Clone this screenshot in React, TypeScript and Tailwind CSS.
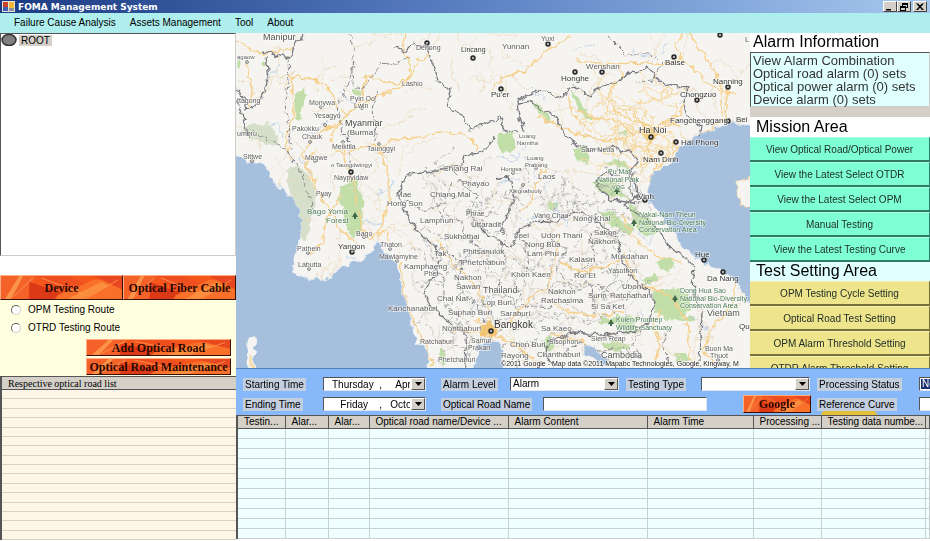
import type { ReactNode } from "react";

const SEA = "#a5bfdd";
const LAND = "#f5f4f1";

type Label = [text: string, x: number, y: number, size?: number, color?: string];

const GREEN = "#4a7a55";
const DARK = "#333333";

const labels: Label[] = [
  ["Manipur", 263, 40, 9, "#555"],
  ["agaow", 237, 59, 6],
  ["Dehong", 416, 50, 7],
  ["Lincang", 461, 52, 7, DARK],
  ["Lashio", 402, 86, 7],
  ["Monywa", 309, 105, 7],
  ["Pyin Oo", 350, 101, 7],
  ["Lwin", 354, 108, 7],
  ["Yesagyo", 314, 118, 7],
  ["Myanmar", 345, 126, 9, "#444"],
  ["(Burma)", 347, 135, 8, "#555"],
  ["Pakokku", 292, 131, 7],
  ["Chauk", 302, 139, 7],
  ["Meiktila", 332, 149, 7],
  ["Taunggyi", 367, 151, 7],
  ["ttagong", 237, 103, 7],
  ["umbru", 237, 136, 7],
  ["Sittwe", 243, 159, 7],
  ["Magwe", 305, 160, 7],
  ["o Taungdwingyi", 331, 167, 6],
  ["Naypyidaw", 334, 180, 7],
  ["Pyay", 316, 196, 7],
  ["Chiang Rai", 443, 171, 8],
  ["Phayao", 462, 186, 8],
  ["Mae", 396, 197, 8],
  ["Chiang Mai", 430, 197, 8],
  ["Hong Son", 387, 206, 8],
  ["Bago Yoma", 307, 214, 8, GREEN],
  ["Forest", 326, 223, 8, GREEN],
  ["Bago", 356, 236, 7],
  ["Yangon", 338, 249, 8, DARK],
  ["Pathein", 297, 251, 7],
  ["Labutta", 298, 267, 7],
  ["Thaton", 380, 247, 7],
  ["Mawlamyine", 379, 259, 7],
  ["Lamphun", 420, 223, 8],
  ["Phrae", 466, 216, 7],
  ["Uttaradit", 471, 227, 8],
  ["Sukhothai", 444, 239, 8],
  ["Tak", 434, 256, 8],
  ["Phitsanulok", 463, 254, 8],
  ["Phetchabun", 462, 265, 8],
  ["Kamphaeng", 404, 269, 8],
  ["Phet", 424, 276, 7],
  ["Nakhon", 454, 280, 8],
  ["Sawan", 456, 289, 8],
  ["Thailand", 483, 293, 9],
  ["Chai Nat", 437, 301, 8],
  ["Lop Buri", 482, 305, 8],
  ["Kanchanaburi", 388, 311, 8],
  ["Suphan Buri", 448, 315, 8],
  ["Saraburi", 500, 316, 8],
  ["Nonthaburi", 442, 331, 8],
  ["Bangkok", 494, 328, 10, DARK],
  ["Ratchaburi", 420, 344, 7],
  ["Samut", 471, 343, 7],
  ["Prakan", 468, 350, 7],
  ["Phetchaburi", 438, 362, 7],
  ["Chon Buri", 510, 347, 8],
  ["Rayong", 501, 358, 8],
  ["Chanthaburi", 537, 357, 8],
  ["Sa Kaeo", 541, 331, 8],
  ["Sisophon", 549, 344, 7],
  ["Siem Reap", 591, 341, 7],
  ["Cambodia", 601, 358, 9, "#555"],
  ["Yunnan", 502, 49, 8],
  ["Yuxi", 541, 41, 7],
  ["Pu'er", 491, 97, 8, DARK],
  ["Honghe", 561, 81, 8, DARK],
  ["Wenshan", 586, 69, 8],
  ["Baise", 665, 65, 8, DARK],
  ["Nanning", 713, 84, 8, DARK],
  ["Chongzuo", 680, 97, 8, DARK],
  ["Fangchenggang", 670, 123, 8, DARK],
  ["Bei", 736, 122, 8, DARK],
  ["Ha Noi", 639, 133, 9, DARK],
  ["Hai Phong", 681, 145, 8, DARK],
  ["Nam Dinh", 643, 162, 8, DARK],
  ["Luang", 519, 138, 6],
  ["Namtha", 517, 145, 6],
  ["Luang", 527, 160, 6],
  ["Prabang", 525, 167, 6],
  ["Hongsa", 501, 171, 6],
  ["Laos", 538, 179, 8],
  ["Xaignabouly", 509, 193, 6],
  ["Sam Neua", 581, 152, 7],
  ["Pu Mat", 608, 174, 7, GREEN],
  ["National Park", 597, 182, 7, GREEN],
  ["- VQG", 608, 189, 6, GREEN],
  ["Vinh", 638, 199, 8, DARK],
  ["Vang Chao", 534, 218, 7],
  ["Nong Khai", 573, 221, 8],
  ["Loei", 514, 238, 8],
  ["Udon Thani", 541, 238, 8],
  ["Sakon", 594, 235, 8],
  ["Nakhon", 588, 244, 8],
  ["Nong Bua", 525, 247, 8],
  ["Lam Phu", 527, 256, 8],
  ["Kalasin", 569, 262, 8],
  ["Mukdahan", 611, 259, 8],
  ["Khon Kaen", 511, 277, 8],
  ["Roi Et", 574, 278, 8],
  ["Yasothon", 608, 273, 7],
  ["Ubon", 622, 289, 8],
  ["Ratchathani", 610, 298, 8],
  ["Nakhon", 548, 294, 8],
  ["Ratchasima", 541, 303, 8],
  ["Surin", 588, 298, 8],
  ["Si Sa Ket", 591, 309, 8],
  ["Nakai-Nam Theun", 639, 217, 7, GREEN],
  ["National Bio-Diversity", 639, 225, 7, GREEN],
  ["Conservation Area", 639, 232, 7, GREEN],
  ["Hue", 695, 257, 8, DARK],
  ["Da Nang", 707, 281, 8, DARK],
  ["Dong Hua Sao", 680, 293, 7, GREEN],
  ["National Bio-Diversity", 680, 301, 7, GREEN],
  ["Conservation Area", 680, 308, 7, GREEN],
  ["Vietnam", 707, 316, 9, "#555"],
  ["Kulen Promtep", 616, 322, 7, GREEN],
  ["Wildlife Sanctuary", 616, 330, 7, GREEN],
  ["Qu", 739, 329, 8, DARK],
  ["Buon Ma", 705, 351, 7],
  ["Thuot", 710, 358, 7],
  ["L", 745, 42, 8],
];

const cities: [number, number][] = [
  [427, 43], [473, 58], [548, 44], [575, 72], [602, 72], [674, 57], [728, 87], [501, 89],
  [697, 100], [651, 137], [676, 142], [661, 153], [728, 121], [352, 252], [351, 172],
  [491, 331], [704, 260], [723, 272], [645, 200], [720, 35],
];

const towns: [number, number][] = [
  [247, 62], [321, 107], [362, 108], [325, 125], [310, 142], [343, 142], [379, 144], [252, 161],
  [315, 161], [308, 253], [309, 269], [364, 237], [390, 249], [397, 261], [536, 168], [523, 185],
  [513, 173], [562, 337], [468, 211], [718, 360], [323, 195],
];

const parks = [
  "M296 93l10-6-2 14-5 20-4-2z",
  "M341 187l14-10 5 12 4 16-2 24-9 10-6-10-4-22-5-10z",
  "M535 103l6 3 11 12-2 4-10-8-6-6z",
  "M572 91l6 4 4 11 8 6 0 8-7-4-6-10-5-8z",
  "M497 134l14-3 5 12-3 11-10-1-7-9z",
  "M591 182l20-4 12 14 8 8-18-3-14-6z",
  "M574 149l10-3 6 10-2 8-12-3z",
  "M602 162l15-4 14 10-2 3-14-5z",
  "M619 132l8 0 0 6-5-2z",
  "M600 213l14-4 8 13 12 4-3 9-12-4-10-7z",
  "M628 203l8 4 7 11 10 2 6 12-14 5-11-16z",
  "M655 262l15-5 5 10-8 5z",
  "M642 280l10-6 8 3-10 8z",
  "M653 291l25-3 11 11 3 11-12 7 14-2 1 6-28-1-12-8z",
  "M600 318l26-3 14 3-6 8 6 6-14 1-10-8-16-3z",
  "M602 345l10-5 17 4 2 5-18 2z",
  "M545 338l7-2 3 12-6 5-5-8z",
  "M438 348l6 0 2 16-4 2z",
  "M262 62l3-1 0 5-4 0z",
  "M549 202l10 0-3 8-8-3z",
  "M674 354l12 0 5 6-12 3z",
  "M354 88l7 2-2 7-5-2z",
  "M237 63l3-3 1 8-3 3z",
];

const roads = [
  "M289 76l20 2 15 5 8 10 5 14 10 7 20-12 20-10 15-4 10-14 5-12 14-8",
  "M365 75l10 4 22 5 12-6 0-16-6-12 2-17",
  "M365 80l-3 20-14 14-10 10-8 15 3 10 12 5 16-7 24-1 8-6 28-3 14-5 27 1 14 12 1 6",
  "M348 114l-14 12-15 6-10 10-7 14 8 14 4 14 8 14",
  "M343 145l2 18 6 14 6 26 6 28 4 8 10-6 10-2 4 12",
  "M362 103l0-12 3-14 8-3",
  "M320 198l12 12 6 16 10 10 12 10",
  "M310 180l-4-16 10-14",
  "M378 146l8 22 4 30-6 20-7 20",
  "M246 62l3 14 4 18-4 14",
  "M237 40l14 10 12 4 30-6",
  "M490 90l12-12 24-8 24-22 20-12",
  "M575 60l30 4 38-1 22 2 16-7 20 18 14 12 20 6",
  "M681 58l-6-12 8-13",
  "M690 33l8 16 16 20 8 20 0 28",
  "M728 88l-2 30-30 20-24 14-12 14-12 28 16 26 22 26 34 18 16 10 12 24",
  "M651 137l-10-14-24-10-10-16 10-18",
  "M651 137l-22-6-10-10-20-2-22-10",
  "M651 137l10-14 20-8 2-12",
  "M651 137l-4 18 10 10-8 16",
  "M630 110l12 14 18 4 12-6 10 4",
  "M538 116l20 10 20 8 30 8 20-4",
  "M568 94l4 20 18 16",
  "M545 168l-10 18-4 16-12 10",
  "M400 262l4 30 10 30 12 24 6 20",
  "M490 330l-2-24-18-26-22-22-10-18",
  "M490 330l20-8 20-24 18-12 8-30 3-24",
  "M545 298l24 14 30 4 26-6",
  "M560 262l20 10 30-6 16-12",
  "M490 332l24 12 20 16",
  "M625 258l12 26 34 12 16 24 4 42",
  "M622 216l10 20 24 20 24 6",
  "M736 282l-4 24-20 22-8 22 10 16",
  "M600 354l-20-14-30-6",
  "M655 366l4-26-6-16 8-14",
  "M476 320l14 10 4 16",
  "M452 330l22 2 16-2",
  "M290 160l-4-24 8-24-2-36",
  "M340 198l-14 20-4 26-12 10",
];

const borders = [
  "M262 51l18 5 10 2 6-16 7-9",
  "M266 56l3 22-9 24-14 8-3-12-6-10",
  "M237 100l8 22 4 14",
  "M396 47l10 4 8-8 14 6 4 10 4 18 14 14-4 16 16 8 8 14 14-4 16-8 4 12 14 4",
  "M524 131l-4-14-2-16 10-6 14-6 12 6 6 3 13-12 10 5 7 6 10-10 20-6 8-9 9 1 9-6 7 5 6 10 18 4 12 2-6 14 4 14 14 10-2 12",
  "M560 127l8 12 18 10 16 2 10-7 8 8 10-2 8 12-8 10 0 18 8 10",
  "M561 127l-6-12-14-6-10-8-12 2",
  "M494 137l-4 8-10 8-16 2-2 10-20 4-16 4-20 1-8 20 8 18 10 18 18 16 6 12-5 18-10 14 4 14 24 22 12 6 1 40",
  "M476 223l14 14 22 10 8-18 16-8 22 2 16-12 20 6 14 14 10 10 4 20 10 18 15 10 8 12-5 20-14 10-34 4-30-2-22 8-5 14 20 26",
  "M495 180l14-3 6 20-8 18-6 18",
  "M632 171l6 24-14 10 30 20 18 24 20 14 2 28 8 22-2 48",
  "M620 176l-16-4-10 10 18 18 28 4",
];

const dashed = [
  "M288 57l1 26-4 20 4 30 2 16",
  "M287 150l-16-10-22-10",
  "M350 33l4 22-2 30 10 4 20-26 12 2 16-8",
  "M354 60l-6 26-10 20 4 28 8 8 0 36",
  "M288 152l14 24 6 20 6 14",
  "M377 91l-4 20 4 30",
  "M455 172l8 14 14 8-8 20 20 18",
  "M432 196l10 20 18 4 8 20 14 10",
  "M405 200l20 12 20-10 8-20",
  "M608 36l18 18 26 0 10 10-10 16-14 2",
  "M550 238l16 12-10 20 18 20 24-6 16 12",
  "M520 234l10 28-16 20 10 24 30 2",
  "M590 234l4 24-16 16 14 12 2 28",
  "M448 250l14 14-4 24 18 16 10 20",
  "M430 270l14 8 0 26 18 14",
  "M500 240l6 20-8 30 16 10 8 18",
  "M560 356l20-14 22 10 20-6 16 16",
  "M640 330l-6 14 10 20M670 326l-8 20 6 18",
];

/** Small wandering polylines used for minor roads and district lines. */
function wander(seed: number, count: number, box: [number, number, number, number], step: number) {
  let s = seed;
  const next = () => {
    s = (s * 16807) % 2147483647;
    return s / 2147483647;
  };
  let d = "";
  for (let i = 0; i < count; i++) {
    d += `M${Math.round(box[0] + next() * box[2])} ${Math.round(box[1] + next() * box[3])}`;
    let a = next() * 6.28;
    for (let k = 0; k < 6; k++) {
      a += (next() - 0.5) * 1.6;
      d += `l${(Math.cos(a) * step).toFixed(1)} ${(Math.sin(a) * step).toFixed(1)}`;
    }
  }
  return d;
}

const minorRoads = wander(77, 190, [236, 33, 514, 335], 6);
const deltaRoads = wander(412, 60, [605, 85, 75, 85], 5);
const thaiRoads = wander(913, 90, [420, 170, 220, 190], 5);
const districts = wander(58, 120, [420, 165, 215, 195], 5);
const rivers = wander(31, 34, [280, 40, 420, 310], 4);

const seas = [
  "M230 150l18 12 17 3 4 10 8 10 16 13 6 14 4 15-6 20-4 25 14 6 18 2 13-10 15-8 7-2 12-7 5-13 6 10 14 13 5 24 5 16 5 20 5 20 11 10 0 24-200 0z",
  "M760 125l-32-2-26 10-12 7-10 7-8 16-19 10-6 20 1 7 15 20 20 27 20 16 20 7 14 13 11 20 12 2z",
  "M474 374l4-26 10-8 12 3 4 14-3 17z",
  "M583 345l6 0 11 7 8 12-6 2-8-8-8-2z",
];

function MapView() {
  return (
    <svg
      viewBox="236 33 514 335"
      preserveAspectRatio="xMidYMid slice"
      className="block h-full w-full"
      role="img"
      aria-label="Map"
      fontFamily="'Liberation Sans', Arial, sans-serif"
    >
      <filter id="rough" filterUnits="userSpaceOnUse" x="226" y="23" width="534" height="355">
        <feTurbulence type="fractalNoise" baseFrequency="0.14" numOctaves="2" seed="4" />
        <feDisplacementMap in="SourceGraphic" scale="8" xChannelSelector="R" yChannelSelector="G" />
      </filter>
      <rect x="236" y="33" width="514" height="335" fill={LAND} />
      <g filter="url(#rough)">
        {parks.map((d) => (
          <path key={d} d={d} fill="#b7d99c" opacity="0.85" />
        ))}
        <path d="M245 125l25-2 8 13-1 11-20-6-14-8zM286 170l14-3 8 10 8 12 0 12-6 24-5 16-6-1 1-22-8-22z" fill="#d5dfc9" />
        <g fill="none" strokeLinejoin="round">
          <path d={minorRoads} stroke="#ecdcc2" strokeWidth="0.8" />
          <path d={thaiRoads} stroke="#d9cfc4" strokeWidth="0.8" />
          <path d={deltaRoads} stroke="#f5d798" strokeWidth="1" />
          <path d={rivers} stroke="#b4cbe4" strokeWidth="0.8" />
          {roads.map((d) => (
            <path key={d} d={d} stroke="#f6d08a" strokeWidth="1.4" />
          ))}
          <path d={districts} stroke="#a4a4a4" strokeWidth="0.8" strokeDasharray="4 2" />
          {dashed.map((d) => (
            <path key={d} d={d} stroke="#85858b" strokeWidth="1" strokeDasharray="5 2" />
          ))}
        </g>
        {seas.map((d) => (
          <path key={d} d={d} fill={SEA} stroke="#dfe8f1" strokeWidth="0.8" />
        ))}
        <path d="M750 177l-12 5 0 15 4 8 18 5v-33z" fill={LAND} stroke="#f3d9a5" />
        <path d="M248 338l6-3 4 4-3 10-2 25-5 0-2-20z" fill={LAND} />
        <path d="M250 352l3 6-1 10-3 0z" fill="#f6dca8" />
        <path d="M481 328l6-6 8 3 4 8-8 4-10-1z" fill="#f0c573" />
        <path d="M644 130l8-3 6 10-6 6-8-4z" fill="#f3cf85" />
        <g fill="none" stroke="#77777e" strokeWidth="1.3" strokeLinejoin="round">
          {borders.map((d) => (
            <path key={d} d={d} />
          ))}
        </g>
      </g>
      {towns.map(([x, y]) => (
        <circle key={`${x}-${y}`} cx={x} cy={y} r="1.4" fill="#fff" stroke="#666" strokeWidth="0.9" />
      ))}
      {cities.map(([x, y]) => (
        <circle key={`${x}-${y}`} cx={x} cy={y} r="2" fill="#aaa" stroke="#222" strokeWidth="1.4" />
      ))}
      {[[355, 216], [617, 191], [634, 223], [675, 299], [611, 323]].map(([x, y]) => (
        <path key={x} d={`M${x} ${y - 4}l3 5h-2v2h-2v-2h-2z`} fill="#3f6b4a" />
      ))}
      <g stroke="#fff" strokeWidth="1.5" strokeOpacity="0.6" paintOrder="stroke">
        {labels.map(([text, x, y, size = 8, color = "#5c5c5c"]) => (
          <text key={`${text}-${x}-${y}`} x={x} y={y} fontSize={size} fill={color}>
            {text}
          </text>
        ))}
        <text x="501" y="366" fontSize="7" fill="#222">
          ©2011 Google - Map data ©2011 Mapabc Technologies, Google, Kingway, M
        </text>
      </g>
    </svg>
  );
}

function FlameButton({ children, className }: { children: ReactNode; className: string }) {
  return (
    <button
      className={`relative overflow-hidden border border-t-[#ffb080] border-l-[#ffb080] border-r-[#3a1005] border-b-[#3a1005] bg-[#f5561c] font-['Liberation_Serif',serif] text-[12px] font-bold whitespace-nowrap text-[#2a0800] ${className}`}
    >
      <svg viewBox="0 0 120 24" preserveAspectRatio="none" className="absolute inset-0 h-full w-full" aria-hidden="true">
        <path d="M0 0h34l-8 24h-26z" fill="#f4622a" />
        <path d="M4 24l14-24 4 0-12 24z" fill="#fb9448" />
        <path d="M28 6l34 12-10 6h-24z" fill="#dc3a16" />
        <path d="M36 0h30l22 10-26 8z" fill="#ef4f1f" />
        <path d="M56 20l36-16 28 0v20h-66z" fill="#f9702a" />
        <path d="M66 24l34-18 6 4-24 14z" fill="#fb8e3c" />
        <path d="M92 0h28v14z" fill="#e8481f" />
        <path d="M40 2l40 16M84 24l32-20M12 22l20-20" stroke="#ff9f5b" strokeWidth="0.8" fill="none" />
      </svg>
      <span className="relative">{children}</span>
    </button>
  );
}

function PanelButton({ children, tone }: { children: ReactNode; tone: "mint" | "khaki" }) {
  const colors =
    tone === "mint"
      ? "bg-[#7fffd4] border-t-[#a8ffe4] border-b-[#2f7d67] border-r-[#2f7d67]"
      : "bg-[#eee48b] border-t-[#f7f0b4] border-b-[#77703a] border-r-[#77703a]";
  return (
    <button className={`block h-[25px] w-full shrink-0 border-t border-r border-b-2 text-[10px] text-[#1c2a26] ${colors}`}>
      {children}
    </button>
  );
}

function ArrowBox() {
  return (
    <span className="pointer-events-none absolute inset-y-px right-px flex w-[14px] items-center justify-center border border-t-white border-l-white border-r-[#555] border-b-[#555] bg-[#d4d0c8]">
      <svg width="7" height="4" viewBox="0 0 7 4" aria-hidden="true">
        <path d="M0 0h7l-3.500 4z" fill="#000" />
      </svg>
    </span>
  );
}

const field = "h-[14px] border border-t-[#555] border-l-[#555] border-r-[#dfe6ee] border-b-[#dfe6ee] text-[10px] leading-[12px]";

function Tag({ htmlFor, children }: { htmlFor: string; children: ReactNode }) {
  return (
    <label htmlFor={htmlFor} className="justify-self-start bg-[#c3cede] px-[2px] text-[10px] leading-[13px] whitespace-nowrap">
      {children}
    </label>
  );
}

function DateField({ id, value }: { id: string; value: string }) {
  return (
    <div className="relative w-[103px]">
      <input id={id} readOnly defaultValue={value} className={`block w-full bg-white pr-[15px] pl-[8px] whitespace-pre ${field}`} />
      <ArrowBox />
    </div>
  );
}

function Choice({ id, options }: { id: string; options: string[] }) {
  return (
    <div className="relative w-[109px]">
      <select id={id} className={`block w-full appearance-none bg-white pl-[2px] ${field}`}>
        {options.map((o) => (
          <option key={o}>{o}</option>
        ))}
      </select>
      <ArrowBox />
    </div>
  );
}

const columns: [string, string][] = [
  ["Testin...", "w-[48px]"],
  ["Alar...", "w-[43px]"],
  ["Alar...", "w-[41px]"],
  ["Optical road name/Device ...", "w-[139px]"],
  ["Alarm Content", "w-[139px]"],
  ["Alarm Time", "w-[106px]"],
  ["Processing ...", "w-[68px]"],
  ["Testing data numbe...", "w-[104px]"],
  ["", ""],
];

const headCell = "h-[13px] truncate border-r border-b border-[#555] bg-[#d4d0c8] p-0 text-left text-[10px] leading-[12px] font-normal";

export default function App() {
  return (
    <div className="flex min-h-screen flex-col bg-white font-['Liberation_Sans',Arial,sans-serif] text-black">
      <header className="flex h-[13px] items-center bg-linear-to-r from-[#1b3a83] via-[#5b80c2] to-[#a6c8ee] pr-[3px] pl-[2px]">
        <svg width="13" height="11" viewBox="0 0 13 11" aria-hidden="true">
          <rect width="13" height="11" fill="#e8e4d8" />
          <rect x="1" y="1" width="5" height="5" fill="#c8402c" />
          <rect x="7" y="1" width="5" height="6" fill="#f2b73c" />
          <rect x="1" y="6" width="5" height="4" fill="#3b5fb5" />
          <rect x="7" y="7" width="5" height="3" fill="#8a8f9c" />
        </svg>
        <h1 className="ml-[3px] font-['DejaVu_Sans',Verdana,sans-serif] text-[9px] leading-[12px] font-bold text-white">FOMA Management System</h1>
        <div className="ml-auto flex">
          {[
            ["Minimize", "M2 7h5v1.500h-5z"],
            ["Restore", "M4 1h6v5h-2v3h-6v-5h2zM5 3v1h3v1h1v-2zM3 6v2h4v-2z"],
            ["Close", "M2 1.500h2l2 2 2-2h2l-3 3.200 3 3.300h-2l-2-2.200-2 2.200h-2l3-3.300z"],
          ].map(([name, d]) => (
            <button
              key={name}
              aria-label={name}
              className={`flex h-[11px] w-[14px] items-center justify-center border border-t-white border-l-white border-r-[#444] border-b-[#444] bg-[#d4d0c8] ${name === "Close" ? "ml-[2px]" : ""}`}
            >
              <svg width="12" height="9" viewBox="0 0 12 9" aria-hidden="true">
                <path d={d} fill="#000" fillRule="evenodd" />
              </svg>
            </button>
          ))}
        </div>
      </header>

      <nav className="flex h-[20px] items-center gap-[14px] bg-[#afeeee] pl-[14px] text-[10px] leading-[12px]">
        {["Failure Cause Analysis", "Assets Management", "Tool", "About"].map((item) => (
          <button key={item}>{item}</button>
        ))}
      </nav>

      <div className="flex flex-1">
        <aside className="flex w-[236px] shrink-0 flex-col">
          <div className="h-[223px] border border-t-[#555] border-l-[#555] border-r-[#ccc] border-b-[#ccc] bg-white">
            <div className="flex items-center text-[10px] leading-[11px]">
              <svg width="16" height="12" viewBox="0 0 16 12" aria-hidden="true">
                <ellipse cx="8" cy="6" rx="7" ry="5.500" fill="#808080" stroke="#333" strokeWidth="1.500" />
              </svg>
              <span className="ml-[2px] bg-[#d4d0c8] px-[2px]">ROOT</span>
            </div>
          </div>
          <div className="mt-[19px] flex h-[25px] bg-[#3a1005]">
            <FlameButton className="w-[123px]">Device</FlameButton>
            <FlameButton className="flex-1">Optical Fiber Cable</FlameButton>
          </div>
          <div className="h-[76px] bg-[#ffffe0] pt-px text-[10px]">
            {["OPM Testing Route", "OTRD Testing Route"].map((name) => (
              <label key={name} className="flex h-[18px] items-center pl-[11px] leading-[12px]">
                <input
                  type="radio"
                  name="route"
                  className="mr-[7px] h-[10px] w-[10px] appearance-none rounded-full border border-t-[#666] border-l-[#666] border-r-[#ccc] border-b-[#ccc] bg-white checked:bg-black"
                />
                {name}
              </label>
            ))}
            <div className="flex flex-col items-end gap-[2px] pt-[2px] pr-[5px]">
              <FlameButton className="h-[17px] w-[145px] leading-[14px]">Add Optical Road</FlameButton>
              <FlameButton className="h-[17px] w-[145px] leading-[14px]">Optical Road Maintenance</FlameButton>
            </div>
          </div>
          <table className="h-[164px] w-full border-l-2 border-[#555]">
            <thead>
              <tr>
                <th className="h-[13px] border-t border-b border-[#555] bg-[#d4d0c8] p-0 pl-[6px] text-left font-['Liberation_Serif',serif] text-[10px] leading-[11px] font-normal">
                  Respective optical road list
                </th>
              </tr>
            </thead>
            <tbody className="bg-[#fdf5e6]">
              {Array.from({ length: 16 }, (_, i) => (
                <tr key={i}>
                  <td className="border-b border-[#d8d2c4] p-0" />
                </tr>
              ))}
            </tbody>
          </table>
        </aside>

        <main className="flex min-w-0 flex-1 flex-col">
          <div className="flex h-[335px]">
            <div className="min-w-0 flex-1">
              <MapView />
            </div>
            <section className="flex w-[180px] shrink-0 flex-col overflow-hidden">
              <h2 className="h-[19px] shrink-0 pl-[3px] text-[16px] leading-[18px]">Alarm Information</h2>
              <div className="h-[55px] shrink-0 border border-t-[#555] border-l-[#555] border-r-[#ccc] border-b-[#ccc] bg-[#e0ffff] pt-px pl-[2px] text-[13px] leading-[13px] whitespace-nowrap text-[#333]">
                <p>View Alarm Combination</p>
                <p>Optical road alarm (0) sets</p>
                <p>Optical power alarm (0) sets</p>
                <p>Device alarm (0) sets</p>
              </div>
              <div className="h-[10px] shrink-0 bg-[#d4d0c8]" />
              <h2 className="h-[20px] shrink-0 pl-[6px] text-[16px] leading-[19px]">Mission Area</h2>
              <PanelButton tone="mint">View Optical Road/Optical Power</PanelButton>
              <PanelButton tone="mint">View the Latest Select OTDR</PanelButton>
              <PanelButton tone="mint">View the Latest Select OPM</PanelButton>
              <PanelButton tone="mint">Manual Testing</PanelButton>
              <PanelButton tone="mint">View the Latest Testing Curve</PanelButton>
              <h2 className="h-[19px] shrink-0 bg-[#e0ffff] pl-[6px] text-[16px] leading-[18px]">Test Setting Area</h2>
              <PanelButton tone="khaki">OPM Testing Cycle Setting</PanelButton>
              <PanelButton tone="khaki">Optical Road Test Setting</PanelButton>
              <PanelButton tone="khaki">OPM Alarm Threshold Setting</PanelButton>
              <PanelButton tone="khaki">OTDR Alarm Threshold Setting</PanelButton>
            </section>
          </div>

          <form className="relative grid h-[47px] grid-cols-[80px_118px_69px_116px_75px_116px_102px_minmax(0,1fr)] grid-rows-[20px_20px] items-center overflow-hidden border-t border-[#5580b8] bg-[#87b9fa] pt-[5px] pl-[7px]">
            <span className="absolute -bottom-[12px] left-[584px] h-[18px] w-[58px] rounded-full bg-[#e3c13a]" />
            <Tag htmlFor="start">Starting Time</Tag>
            <DateField id="start" value="Thursday  ,     April" />
            <Tag htmlFor="level">Alarm Level</Tag>
            <Choice id="level" options={["Alarm"]} />
            <Tag htmlFor="type">Testing Type</Tag>
            <Choice id="type" options={[""]} />
            <Tag htmlFor="status">Processing Status</Tag>
            <select
              id="status"
              className={`w-[60px] appearance-none bg-[#1c3170] pl-[2px] text-white shadow-[inset_0_0_0_1px_white] ${field}`}
            >
              <option>No</option>
            </select>
            <Tag htmlFor="end">Ending Time</Tag>
            <DateField id="end" value="   Friday    ,   October" />
            <div className="col-span-4 flex items-center pr-[6px]">
              <div className="flex w-[102px]">
                <Tag htmlFor="road">Optical Road Name</Tag>
              </div>
              <input id="road" className={`w-[164px] bg-white ${field}`} />
              <FlameButton className="ml-auto h-[18px] w-[68px] leading-[14px]">Google</FlameButton>
            </div>
            <div className="relative flex">
              <Tag htmlFor="curve">Reference Curve</Tag>
            </div>
            <input id="curve" className={`w-[60px] bg-white ${field}`} />
          </form>

          <table className="w-full table-fixed border-t border-l-2 border-[#555] bg-[#f0ffff]">
            <thead>
              <tr>
                {columns.map(([name, width], i) => (
                  <th key={i} className={`${headCell} ${width} pl-[6px]`}>
                    {name}
                  </th>
                ))}
              </tr>
            </thead>
            <tbody>
              {Array.from({ length: 11 }, (_, r) => (
                <tr key={r}>
                  {columns.map((_, c) => (
                    <td key={c} className="h-[10px] border-r border-b border-[#c9d0d0] p-0" />
                  ))}
                </tr>
              ))}
            </tbody>
          </table>
        </main>
      </div>
    </div>
  );
}
